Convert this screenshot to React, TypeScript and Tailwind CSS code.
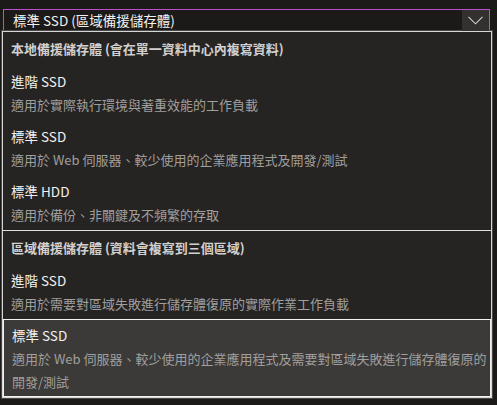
type Option = { title: string; desc: string[]; selected?: boolean };
type Group = { header: string; options: Option[] };

const groups: Group[] = [
  {
    header: '本地備援儲存體 (會在單一資料中心內複寫資料)',
    options: [
      { title: '進階 SSD', desc: ['適用於實際執行環境與著重效能的工作負載'] },
      { title: '標準 SSD', desc: ['適用於 Web 伺服器、較少使用的企業應用程式及開發/測試'] },
      { title: '標準 HDD', desc: ['適用於備份、非關鍵及不頻繁的存取'] },
    ],
  },
  {
    header: '區域備援儲存體 (資料會複寫到三個區域)',
    options: [
      { title: '進階 SSD', desc: ['適用於需要對區域失敗進行儲存體復原的實際作業工作負載'] },
      {
        title: '標準 SSD',
        desc: ['適用於 Web 伺服器、較少使用的企業應用程式及需要對區域失敗進行儲存體復原的', '開發/測試'],
        selected: true,
      },
    ],
  },
];

function OptionRow({ option }: { option: Option }) {
  return (
    <div
      className={
        option.selected
          ? 'px-2 py-[3px] bg-[#3b3a39] border border-[#f3f2f1]'
          : 'px-2 py-1'
      }
    >
      <div className="h-6 leading-6 text-[13.5px] text-[#f3f2f1]">{option.title}</div>
      {option.desc.map((line, i) => (
        <div key={i} className="h-[23px] leading-[23px] text-[13px] text-[#a19f9d] whitespace-nowrap">
          {line}
        </div>
      ))}
    </div>
  );
}

export default function App() {
  return (
    <div
      className="w-[497px] h-[405px] overflow-hidden bg-[#1b1a19]"
      style={{ fontFamily: '"Noto Sans CJK TC", "Noto Sans", sans-serif' }}
    >
      <div className="pt-[9px] pl-[3px]">
        <div className="w-[487px] h-[22px] flex items-stretch border border-b-0 border-[#b94fca] bg-[#1b1a19]">
          <div className="flex-1 pl-[9px] leading-[21px] text-[13.5px] text-[#f3f2f1]">標準 SSD (區域備援儲存體)</div>
          <div className="w-[27px] flex items-center justify-center bg-[#323130]">
            <svg width="15" height="9" viewBox="0 0 15 9" fill="none">
              <polyline points="0.5,0.8 7.5,7.8 14.5,0.8" stroke="#d2d0ce" strokeWidth="1.1" />
            </svg>
          </div>
        </div>
      </div>
      <div className="ml-[2px] w-[490px] border border-[#d6d6d6] bg-[#252423] shadow-[0_0_0_1px_#4a4a4a]">
        {groups.map((group, gi) => (
          <div key={gi} className={gi > 0 ? 'border-t border-[#e1dfdd]' : ''}>
            <div className="h-[33px] px-2 flex items-center text-[13px] font-bold text-[#d2d0ce]">
              {group.header}
            </div>
            {group.options.map((option, oi) => (
              <OptionRow key={oi} option={option} />
            ))}
          </div>
        ))}
      </div>
    </div>
  );
}
